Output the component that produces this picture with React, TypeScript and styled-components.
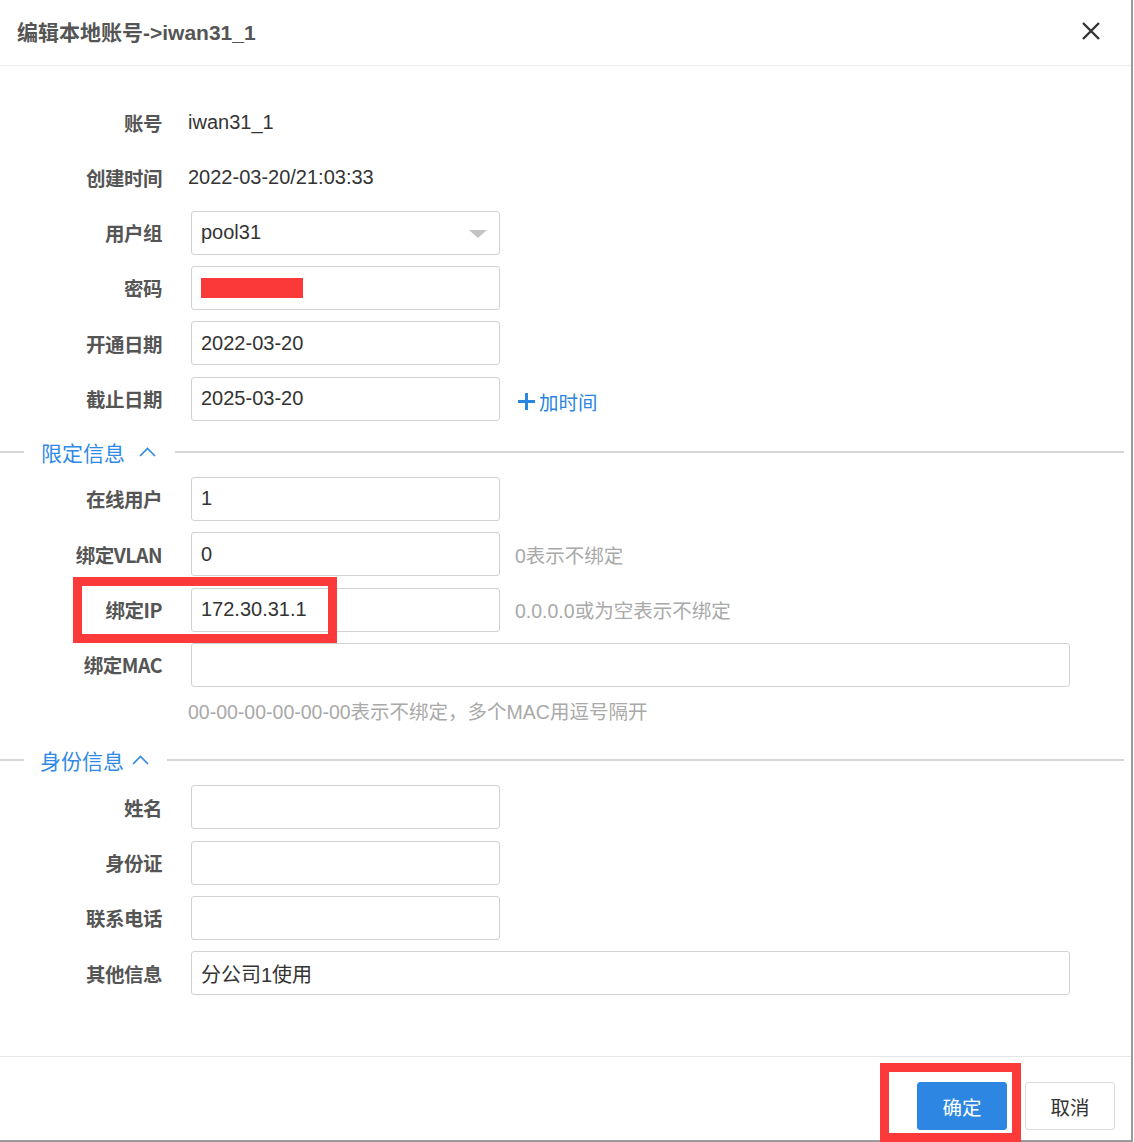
import * as React from 'react'
import styled, { createGlobalStyle } from 'styled-components'

const GlobalStyle = createGlobalStyle`
  html, body {
    margin: 0;
    padding: 0;
    background: #fff;
  }
  body {
    font-family: "Liberation Sans", "Noto Sans CJK SC", sans-serif;
  }
`

const Dialog = styled.div`
  position: relative;
  width: 1133px;
  height: 1142px;
  box-sizing: border-box;
  border-right: 2px solid #9a9a9a;
  border-bottom: 2px solid #9a9a9a;
  background: #fff;
  display: flex;
  flex-direction: column;
`

const Header = styled.div`
  height: 66px;
  box-sizing: border-box;
  flex: none;
  display: flex;
  align-items: center;
  justify-content: space-between;
  padding: 0 30px 4px 17px;
  border-bottom: 1px solid #ececec;
  font-size: 21px;
  font-weight: bold;
  color: #555;
`

const Close = styled.button`
  border: none;
  background: none;
  padding: 0;
  width: 20px;
  height: 20px;
  cursor: pointer;
  display: flex;
  margin-top: 0;
`

const Body = styled.div`
  flex: 1;
  padding: 34px 7px 0 0;
`

const Row = styled.div`
  display: grid;
  grid-template-columns: 162px 1fr;
  column-gap: 29px;
  align-items: center;
  min-height: 44px;
  margin-bottom: 11.33px;
`

const Label = styled.div`
  text-align: right;
  font-size: 19.5px;
  font-weight: bold;
  color: #555;
  font-family: "Noto Sans CJK SC", sans-serif;
  letter-spacing: -0.5px;
`

const Value = styled.div`
  margin-left: -3px;
  font-size: 20px;
  color: #333;
`

const FieldLine = styled.div`
  display: flex;
  align-items: center;
  gap: 15px;
`

const Field = styled.div<{ $wide?: boolean }>`
  position: relative;
  box-sizing: border-box;
  width: ${p => (p.$wide ? '879px' : '309px')};
  height: 44px;
  border: 1.5px solid #d2d2d2;
  border-radius: 3px;
  padding: 0 9px;
  display: flex;
  align-items: center;
  font-size: 20px;
  color: #333;
  font-family: "Liberation Sans", "Noto Sans CJK SC", sans-serif;
`

const Caret = styled.span`
  position: absolute;
  right: 12px;
  top: 18px;
  width: 0;
  height: 0;
  border-left: 9px solid transparent;
  border-right: 9px solid transparent;
  border-top: 8px solid #c4c4c4;
`

const Redacted = styled.span`
  display: block;
  width: 102px;
  height: 20px;
  background: #fb3939;
`

const Hint = styled.span`
  font-size: 19.5px;
  color: #a9a9a9;
  font-family: "Liberation Sans", "Noto Sans CJK SC", sans-serif;
`

const HintRow = styled.div`
  padding-left: 188px;
  height: 24px;
  display: flex;
  align-items: center;
  margin: 0 0 18px;
`

const AddTime = styled.a`
  display: flex;
  align-items: center;
  gap: 3px;
  margin: 6px 0 0 2px;
  color: #2a86e0;
  font-size: 19.5px;
  font-family: "Noto Sans CJK SC", sans-serif;
  cursor: pointer;
`

const Divider = styled.div<{ $gap: number }>`
  display: flex;
  align-items: center;
  height: 40px;
  margin-bottom: 5px;
  color: #2f8ae5;
  font-size: 21px;
  font-family: "Noto Sans CJK SC", sans-serif;

  &::before {
    content: '';
    width: 24px;
    height: 2px;
    background: #d6d6d6;
  }
  &::after {
    content: '';
    flex: 1;
    height: 2px;
    background: #d6d6d6;
    margin-left: ${p => p.$gap}px;
  }
`

const DividerTitle = styled.span<{ $pad: number, $caretGap: number }>`
  display: flex;
  align-items: center;
  padding-left: ${p => p.$pad}px;
  gap: ${p => p.$caretGap}px;
`

const Footer = styled.div`
  flex: none;
  height: 84px;
  box-sizing: border-box;
  border-top: 1px solid #e6e6e6;
  display: flex;
  justify-content: flex-end;
  align-items: flex-start;
  gap: 18px;
  padding: 25px 16px 0 0;
`

const Button = styled.button<{ $primary?: boolean }>`
  width: 90px;
  height: 48px;
  border-radius: 3px;
  font-size: 19.5px;
  font-family: "Noto Sans CJK SC", sans-serif;
  cursor: pointer;
  border: 1.5px solid ${p => (p.$primary ? '#2d87e2' : '#dcdcdc')};
  background: ${p => (p.$primary ? '#2d87e2' : '#fff')};
  color: ${p => (p.$primary ? '#fff' : '#333')};
`

const Mark = styled.div`
  position: absolute;
  box-sizing: border-box;
  border: 9px solid #fc3a3a;
  pointer-events: none;
`

const CloseIcon = () => (
  <svg width="20" height="20" viewBox="0 0 20 20">
    <path d="M2 2 L18 18 M18 2 L2 18" stroke="#333" strokeWidth="2.4" fill="none" />
  </svg>
)

const ChevronUp = () => (
  <svg width="17" height="10" viewBox="0 0 17 10">
    <path d="M1 9 L8.5 1.5 L16 9" stroke="#2f8ae5" strokeWidth="1.6" fill="none" />
  </svg>
)

const Plus = () => (
  <svg width="19" height="19" viewBox="0 0 19 19">
    <path d="M9.5 1 V18 M1 9.5 H18" stroke="#2a86e0" strokeWidth="3" fill="none" />
  </svg>
)

interface FormRowProps {
  label: string,
  children: React.ReactNode,
}

const FormRow = ({ label, children }: FormRowProps) => (
  <Row>
    <Label>{label}</Label>
    {children}
  </Row>
)

interface SectionProps {
  title: string,
  pad: number,
  caretGap: number,
  gap: number,
}

const Section = ({ title, pad, caretGap, gap }: SectionProps) => (
  <Divider $gap={gap}>
    <DividerTitle $pad={pad} $caretGap={caretGap}>
      {title}
      <ChevronUp />
    </DividerTitle>
  </Divider>
)

const App = () => (
  <>
    <GlobalStyle />
    <Dialog>
      <Header>
        <span>编辑本地账号-&gt;iwan31_1</span>
        <Close aria-label="close"><CloseIcon /></Close>
      </Header>

      <Body>
        <FormRow label="账号"><Value>iwan31_1</Value></FormRow>
        <FormRow label="创建时间"><Value>2022-03-20/21:03:33</Value></FormRow>
        <FormRow label="用户组">
          <Field>pool31<Caret /></Field>
        </FormRow>
        <FormRow label="密码">
          <Field><Redacted /></Field>
        </FormRow>
        <FormRow label="开通日期">
          <Field>2022-03-20</Field>
        </FormRow>
        <FormRow label="截止日期">
          <FieldLine>
            <Field>2025-03-20</Field>
            <AddTime><Plus />加时间</AddTime>
          </FieldLine>
        </FormRow>

        <Section title="限定信息" pad={17} caretGap={14} gap={19} />

        <FormRow label="在线用户">
          <Field>1</Field>
        </FormRow>
        <FormRow label="绑定VLAN">
          <FieldLine>
            <Field>0</Field>
            <Hint>0表示不绑定</Hint>
          </FieldLine>
        </FormRow>
        <FormRow label="绑定IP">
          <FieldLine>
            <Field>172.30.31.1</Field>
            <Hint>0.0.0.0或为空表示不绑定</Hint>
          </FieldLine>
        </FormRow>
        <FormRow label="绑定MAC">
          <Field $wide />
        </FormRow>
        <HintRow>
          <Hint>00-00-00-00-00-00表示不绑定，多个MAC用逗号隔开</Hint>
        </HintRow>

        <Section title="身份信息" pad={16} caretGap={8} gap={18} />

        <FormRow label="姓名"><Field /></FormRow>
        <FormRow label="身份证"><Field /></FormRow>
        <FormRow label="联系电话"><Field /></FormRow>
        <FormRow label="其他信息">
          <Field $wide>分公司1使用</Field>
        </FormRow>
      </Body>

      <Footer>
        <Button $primary>确定</Button>
        <Button>取消</Button>
      </Footer>

      <Mark style={{ left: 73, top: 577, width: 264, height: 66 }} />
      <Mark style={{ left: 880, top: 1063, width: 141, height: 79 }} />
    </Dialog>
  </>
)

export default App
